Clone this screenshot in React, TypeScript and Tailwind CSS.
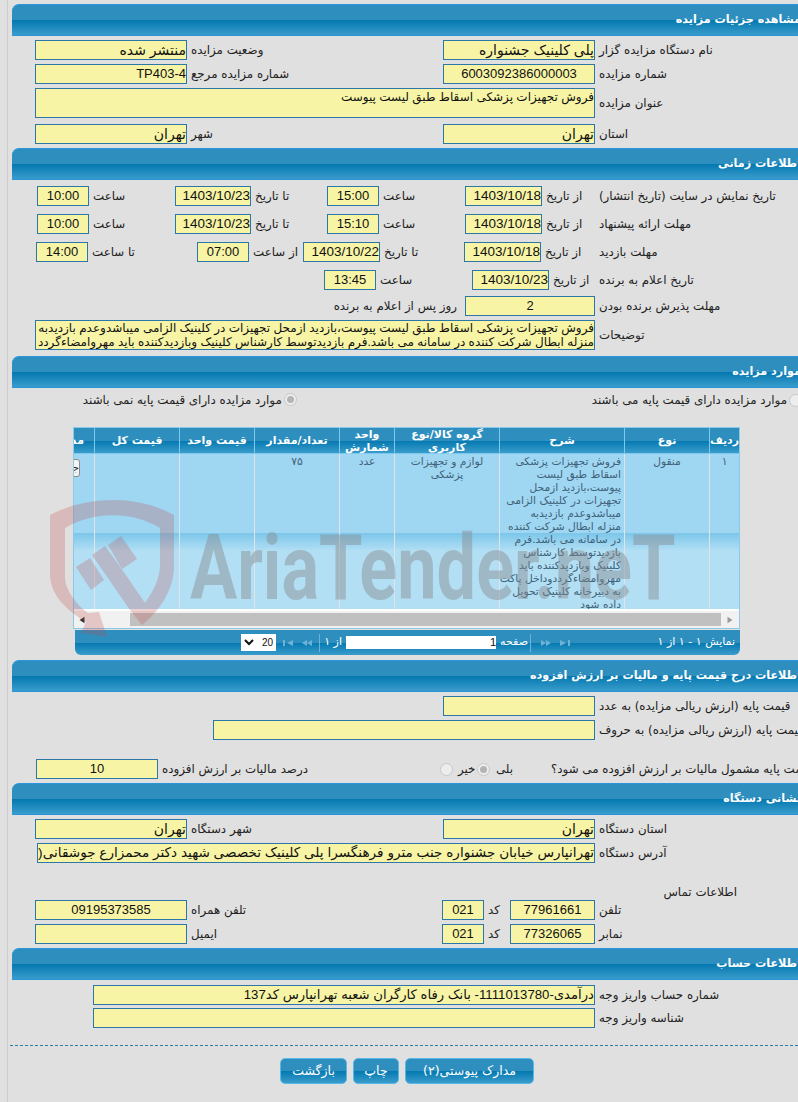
import React from "react";

const HEAD = "bg-[linear-gradient(#2e8fbf_50%,#0378b0_50%,#3a9ccb_100%)]";
const BOX = "shrink-0 border border-[#2b78a8] bg-[#f7f5a5] text-[#111] whitespace-nowrap overflow-hidden font-['Liberation_Sans','DejaVu_Sans',sans-serif]";
const FA = "text-[14px]";

function Section({ title }: { title: string }) {
  return (
    <div className={`h-[32px] rounded-tl-[7px] border-t border-b border-[#2a95dc] ${HEAD} flex items-center justify-start -mr-[3px]`}>
      <span className="text-white font-bold text-[11.2px] whitespace-nowrap">{title}</span>
    </div>
  );
}

function Lbl({ w, children }: { w: number; children?: React.ReactNode }) {
  return (
    <div className="shrink-0 flex justify-end pl-[4px] pt-[2px] text-[#222] whitespace-nowrap" style={{ width: w }}>
      <span className="shrink-0">{children}</span>
    </div>
  );
}

function Box({ w, children, center, className = "text-[13px]" }: { w: number; children?: React.ReactNode; center?: boolean; className?: string }) {
  return (
    <div className={`${BOX} h-[20px] leading-[18px] ${center ? "text-center" : "text-right"} ${className}`} style={{ width: w }}>
      {children}
    </div>
  );
}

function DateBox({ w = 77, children }: { w?: number; children: React.ReactNode }) {
  return <Box w={w} className="text-[13.5px]">{children}</Box>;
}

function Row({ children, className = "" }: { children: React.ReactNode; className?: string }) {
  return <div className={`flex items-center h-[20px] ${className}`}>{children}</div>;
}

function Radio({ on }: { on?: boolean }) {
  return (
    <span className="shrink-0 w-[13px] h-[13px] rounded-full border border-[#c8c8c8] bg-[#ededed] flex items-center justify-center">
      {on && <span className="w-[7px] h-[7px] rounded-full bg-[#b4b4b4]" />}
    </span>
  );
}

const COLS = [30, 85, 125, 105, 55, 85, 75, 85, 21];

function Tri({ d, fill = "#6fb2d6", w = 12 }: { d: string; fill?: string; w?: number }) {
  return (
    <svg width={w} height="8" viewBox="0 0 12 8" className="shrink-0">
      <path d={d} fill={fill} />
    </svg>
  );
}

function Btn({ w, children }: { w: number; children: React.ReactNode }) {
  return (
    <div className={`h-[26px] rounded-[5px] border border-[#55b8e6] ${HEAD} text-white text-[12.5px] flex items-center justify-center`} style={{ width: w }}>
      {children}
    </div>
  );
}

export default function App() {
  return (
    <div dir="rtl" className="relative w-[798px] h-[1102px] overflow-hidden bg-[#e0e0e0] flex font-['DejaVu_Sans',sans-serif] text-[11.85px] text-[#222]">
      <div className="flex-1 min-w-0 pt-[4px]">
        {/* جزئیات */}
        <Section title="مشاهده جزئیات مزایده" />
        <div className="pt-[4px] pb-[4px] flex flex-col gap-[4px]">
          <Row>
            <Lbl w={203}>نام دستگاه مزایده گزار</Lbl>
            <Box w={152} className={FA}>پلی کلینیک جشنواره</Box>
            <Lbl w={256}>وضعیت مزایده</Lbl>
            <Box w={152} className={FA}>منتشر شده</Box>
          </Row>
          <Row>
            <Lbl w={203}>شماره مزایده</Lbl>
            <Box w={152} center>6003092386000003</Box>
            <Lbl w={256}>شماره مزایده مرجع</Lbl>
            <Box w={152}>TP403-4</Box>
          </Row>
          <div className="flex items-center h-[30px]">
            <Lbl w={203}>عنوان مزایده</Lbl>
            <div className={`${BOX} h-[30px] w-[560px] text-right text-[12px] leading-[16px]`}>فروش تجهیزات پزشکی اسقاط طبق لیست پیوست</div>
          </div>
          <Row className="mt-[2px]">
            <Lbl w={203}>استان</Lbl>
            <Box w={152} className={FA}>تهران</Box>
            <Lbl w={256}>شهر</Lbl>
            <Box w={152} className={FA}>تهران</Box>
          </Row>
        </div>

        {/* زمانی */}
        <Section title="اطلاعات زمانی" />
        <div className="pt-[6px] pb-[6px]">
          <Row>
            <Lbl w={203}>تاریخ نمایش در سایت (تاریخ انتشار)</Lbl>
            <Lbl w={53}>از تاریخ</Lbl>
            <DateBox>1403/10/18</DateBox>
            <Lbl w={86}>ساعت</Lbl>
            <Box w={52} center>15:00</Box>
            <Lbl w={76}>تا تاریخ</Lbl>
            <DateBox w={76}>1403/10/23</DateBox>
            <Lbl w={86}>ساعت</Lbl>
            <Box w={52} center>10:00</Box>
          </Row>
          <Row className="mt-[8px]">
            <Lbl w={203}>مهلت ارائه پیشنهاد</Lbl>
            <Lbl w={53}>از تاریخ</Lbl>
            <DateBox>1403/10/18</DateBox>
            <Lbl w={86}>ساعت</Lbl>
            <Box w={52} center>15:10</Box>
            <Lbl w={76}>تا تاریخ</Lbl>
            <DateBox w={76}>1403/10/23</DateBox>
            <Lbl w={86}>ساعت</Lbl>
            <Box w={52} center>10:00</Box>
          </Row>
          <Row className="mt-[8px]">
            <Lbl w={203}>مهلت بازدید</Lbl>
            <Lbl w={54}>از تاریخ</Lbl>
            <DateBox>1403/10/18</DateBox>
            <Lbl w={84}>تا تاریخ</Lbl>
            <DateBox>1403/10/22</DateBox>
            <Lbl w={54}>از ساعت</Lbl>
            <Box w={52} center>07:00</Box>
            <Lbl w={109}>تا ساعت</Lbl>
            <Box w={52} center>14:00</Box>
          </Row>
          <Row className="mt-[8px]">
            <Lbl w={203}>تاریخ اعلام به برنده</Lbl>
            <Lbl w={46}>از تاریخ</Lbl>
            <DateBox>1403/10/23</DateBox>
            <Lbl w={96}>ساعت</Lbl>
            <Box w={52} center>13:45</Box>
          </Row>
          <Row className="mt-[6px]">
            <Lbl w={203}>مهلت پذیرش برنده بودن</Lbl>
            <Box w={130} center>2</Box>
            <span className="pr-[8px] pt-[2px] whitespace-nowrap">روز پس از اعلام به برنده</span>
          </Row>
          <div className="flex items-center h-[30px] mt-[4px]">
            <Lbl w={203}>توضیحات</Lbl>
            <div className={`${BOX} h-[30px] w-[560px] text-right text-[12px] leading-[14px]`}>
              <div>فروش تجهیزات پزشکی اسقاط طبق لیست پیوست،بازدید ازمحل تجهیزات در کلینیک الزامی میباشدوعدم بازدیدبه</div>
              <div>منزله ابطال شرکت کننده در سامانه می باشد.فرم بازدیدتوسط کارشناس کلینیک وبازدیدکننده باید مهروامضاءگردد</div>
            </div>
          </div>
        </div>

        {/* موارد */}
        <Section title="موارد مزایده" />
        <div className="pb-[5px]">
          <div className="flex items-center h-[22px] mt-[1px] mr-[-4px]">
            <Radio />
            <span className="pr-[2px] pt-[2px] whitespace-nowrap">موارد مزایده دارای قیمت پایه می باشند</span>
            <span className="mr-[295px] flex items-center">
              <Radio on />
              <span className="pr-[2px] pt-[2px] whitespace-nowrap">موارد مزایده دارای قیمت پایه نمی باشند</span>
            </span>
          </div>

          <div className="mr-[58px] mt-[16px] w-[667px] border border-[#8cc8ea] bg-[#f1f1f1]">
            <div className={`flex h-[26px] ${HEAD} border-b border-[#7cc8ee] text-white font-bold text-[11px] leading-[13px]`}>
              {["ردیف", "نوع", "شرح", "گروه کالا/نوع کاربری", "واحد شمارش", "تعداد/مقدار", "قیمت واحد", "قیمت کل"].map((t, i) => (
                <div key={t} className="shrink-0 flex items-center justify-center text-center border-l border-[#7cc8ee]" style={{ width: COLS[i] }}>
                  {t}
                </div>
              ))}
              <div className="overflow-hidden pr-[10px] flex items-center whitespace-nowrap" style={{ width: COLS[8] }}>مدارک</div>
            </div>
            <div className="flex h-[157px] overflow-hidden bg-[linear-gradient(#9fd6f2_79px,#7cc6ea_79px,#b2dff4_97px)] text-[#3f6279] text-[10.7px] leading-[13px] border-b-2 border-white">
              {["۱", "منقول", null, "لوازم و تجهیزات پزشکی", "عدد", "۷۵", "", ""].map((t, i) => (
                <div key={i} className={`shrink-0 border-l border-[#dfe4e6] ${i === 2 ? "text-right pr-[3px] whitespace-nowrap" : "text-center px-[2px]"} pt-[1px]`} style={{ width: COLS[i] }}>
                  {t === null ? (
                    <>
                      <div>فروش تجهیزات پزشکی</div>
                      <div>اسقاط طبق لیست</div>
                      <div>پیوست،بازدید ازمحل</div>
                      <div>تجهیزات در کلینیک الزامی</div>
                      <div>میباشدوعدم بازدیدبه</div>
                      <div>منزله ابطال شرکت کننده</div>
                      <div>در سامانه می باشد.فرم</div>
                      <div>بازدیدتوسط کارشناس</div>
                      <div>کلینیک وبازدیدکننده باید</div>
                      <div>مهروامضاءگرددوداخل پاکت</div>
                      <div>به دبیرخانه کلینیک تحویل</div>
                      <div>داده شود</div>
                    </>
                  ) : t}
                </div>
              ))}
              <div className="overflow-hidden pr-[14px] pt-[5px] flex items-start" style={{ width: COLS[8] }}>
                <span className="shrink-0 w-[30px] h-[18px] rounded-[3px] border border-[#8a8a8a] bg-[#f4f4f4] text-[#222] text-[10px] text-center leading-[16px] whitespace-nowrap">جزئیات</span>
              </div>
            </div>
            <div className="flex items-center h-[17px] bg-[#f1f1f1]">
              <span className="w-[18px] flex justify-center"><Tri d="M3 0 L9 4 L3 8 Z" fill="#9a9a9a" w={10} /></span>
              <div className="h-[13px] w-[591px] bg-[#c0c0c0]" />
              <span className="w-[56px] flex justify-end pl-[3px]"><Tri d="M9 0 L3 4 L9 8 Z" fill="#333" w={10} /></span>
            </div>
          </div>

          <div className={`mr-[58px] mt-[1px] w-[665px] h-[25px] rounded-b-[6px] ${HEAD} flex items-center text-white text-[11px]`}>
            <span className="pr-[5px] w-[84px] whitespace-nowrap text-right shrink-0">نمایش ۱ - ۱ از ۱</span>
            <span className="flex items-center gap-[7px] mr-[85px] shrink-0">
              <Tri d="M1 1 L7 4 L1 7 Z M9 1 H11 V7 H9 Z" />
              <Tri d="M1 1 L6 4 L1 7 Z M6 1 L11 4 L6 7 Z" />
            </span>
            <span className="w-[1px] h-[18px] bg-[#6fb2d6] mr-[9px] shrink-0" />
            <span className="pr-[2px] w-[34px] shrink-0 whitespace-nowrap">صفحه</span>
            <span className="w-[150px] h-[13px] bg-white text-[#111] text-[11px] leading-[13px] text-right shrink-0 font-['Liberation_Sans',sans-serif]">1</span>
            <span className="pr-[4px] w-[26px] shrink-0 whitespace-nowrap">از ۱</span>
            <span className="w-[1px] h-[18px] bg-[#6fb2d6] shrink-0" />
            <span className="flex items-center gap-[7px] mr-[6px] shrink-0">
              <Tri d="M11 1 L6 4 L11 7 Z M6 1 L1 4 L6 7 Z" />
              <Tri d="M11 1 L5 4 L11 7 Z M1 1 H3 V7 H1 Z" />
            </span>
            <span className="mr-[6px] w-[35px] h-[17px] shrink-0 bg-white text-[#111] flex items-center justify-between px-[3px] font-['Liberation_Sans',sans-serif] text-[10px]">
              <span>20</span>
              <svg width="10" height="7" viewBox="0 0 10 7"><path d="M1 1 L5 5 L9 1" fill="none" stroke="#111" strokeWidth="2" /></svg>
            </span>
          </div>
        </div>

        {/* قیمت */}
        <Section title="اطلاعات درج قیمت پایه و مالیات بر ارزش افزوده" />
        <div className="pt-[4px] pb-[4px]">
          <Row>
            <Lbl w={203}>قیمت پایه (ارزش ریالی مزایده) به عدد</Lbl>
            <Box w={152} />
          </Row>
          <Row className="mt-[4px]">
            <Lbl w={203}>قیمت پایه (ارزش ریالی مزایده) به حروف</Lbl>
            <Box w={382} />
          </Row>
          <Row className="mt-[19px]">
            <Lbl w={251}>قیمت پایه مشمول مالیات بر ارزش افزوده می شود؟</Lbl>
            <span className="w-[51px] text-left shrink-0 pt-[2px]">بلی</span>
            <span className="mr-[6px] shrink-0"><Radio on /></span>
            <span className="w-[19px] text-left shrink-0 pt-[2px] whitespace-nowrap">خیر</span>
            <span className="mr-[5px] shrink-0"><Radio /></span>
            <span className="w-[144px] shrink-0" />
            <Lbl w={138}>درصد مالیات بر ارزش افزوده</Lbl>
            <Box w={122} center>10</Box>
          </Row>
        </div>

        {/* نشانی */}
        <Section title="نشانی دستگاه" />
        <div className="pt-[4px] pb-[4px]">
          <Row>
            <Lbl w={203}>استان دستگاه</Lbl>
            <Box w={152} className={FA}>تهران</Box>
            <Lbl w={256}>شهر دستگاه</Lbl>
            <Box w={152} className={FA}>تهران</Box>
          </Row>
          <Row className="mt-[4px]">
            <Lbl w={203}>آدرس دستگاه</Lbl>
            <Box w={558} className="text-[13.6px]">تهرانپارس خیابان جشنواره جنب مترو فرهنگسرا پلی کلینیک تخصصی شهید دکتر محمزارع جوشقانی(</Box>
          </Row>
          <div className="h-[37px] pr-[61px] pt-[21px] leading-[16px]">اطلاعات تماس</div>
          <Row>
            <Lbl w={203}>تلفن</Lbl>
            <Box w={85} center>77961661</Box>
            <Lbl w={26}>کد</Lbl>
            <Box w={42} center>021</Box>
            <Lbl w={255}>تلفن همراه</Lbl>
            <Box w={152} center>09195373585</Box>
          </Row>
          <Row className="mt-[4px]">
            <Lbl w={203}>نمابر</Lbl>
            <Box w={85} center>77326065</Box>
            <Lbl w={26}>کد</Lbl>
            <Box w={42} center>021</Box>
            <Lbl w={255}>ایمیل</Lbl>
            <Box w={152} />
          </Row>
        </div>

        {/* حساب */}
        <Section title="اطلاعات حساب" />
        <div className="pt-[5px]">
          <Row>
            <Lbl w={203}>شماره حساب واریز وجه</Lbl>
            <Box w={502} className="text-[13.2px]">درآمدی-1111013780- بانک رفاه کارگران شعبه تهرانپارس کد137</Box>
          </Row>
          <Row className="mt-[3px]">
            <Lbl w={203}>شناسه واریز وجه</Lbl>
            <Box w={502} />
          </Row>
        </div>
        <div className="mt-[17px] ml-[-2px] border-t border-dashed border-[#2a7aaa]" />
        <div className="mt-[12px] flex justify-center gap-[6px] pl-[4px]">
          <Btn w={129}>مدارک پیوستی(۲)</Btn>
          <Btn w={46}>چاپ</Btn>
          <Btn w={67}>بازگشت</Btn>
        </div>
      </div>
      <div className="shrink-0 w-[4px]" />
      <div className="shrink-0 w-[1px] bg-[#cccccc]" />
      <div className="shrink-0 w-[7px]" />

      {/* watermark */}
      <div dir="ltr" className="absolute left-[48px] top-[498px] w-[610px] h-[142px] pointer-events-none">
        <svg width="130" height="142" viewBox="0 0 130 142" className="absolute left-0 top-0">
          <path fillRule="evenodd" fill="rgba(190,70,70,0.25)" d="M2 17 C40 -3 90 -3 126 17 V69 C126 92 110 115 94 127 L97 105 C106 92 112 80 112 67 V30 C85 13 45 13 17 30 V79 C17 92 28 106 40 115 L51 114 L59 139 L33 135 L38 124 C15 110 2 95 2 75 Z" />
          <path fill="rgba(190,70,70,0.25)" d="M28 69 L42 60 L56 82 L43 92 Z M44 57 L57 48 L73 70 L97 105 L94 127 L82 112 Z M60 47 L73 38 L89 61 L74 71 Z" />
        </svg>
        <div className="absolute left-[142px] top-[0px] h-[142px] flex items-center origin-left scale-x-[0.78] text-[90px] font-bold leading-none whitespace-nowrap font-['Roboto',sans-serif] text-[rgba(136,138,142,0.45)]">
          AriaTender.neT
        </div>
      </div>
    </div>
  );
}
